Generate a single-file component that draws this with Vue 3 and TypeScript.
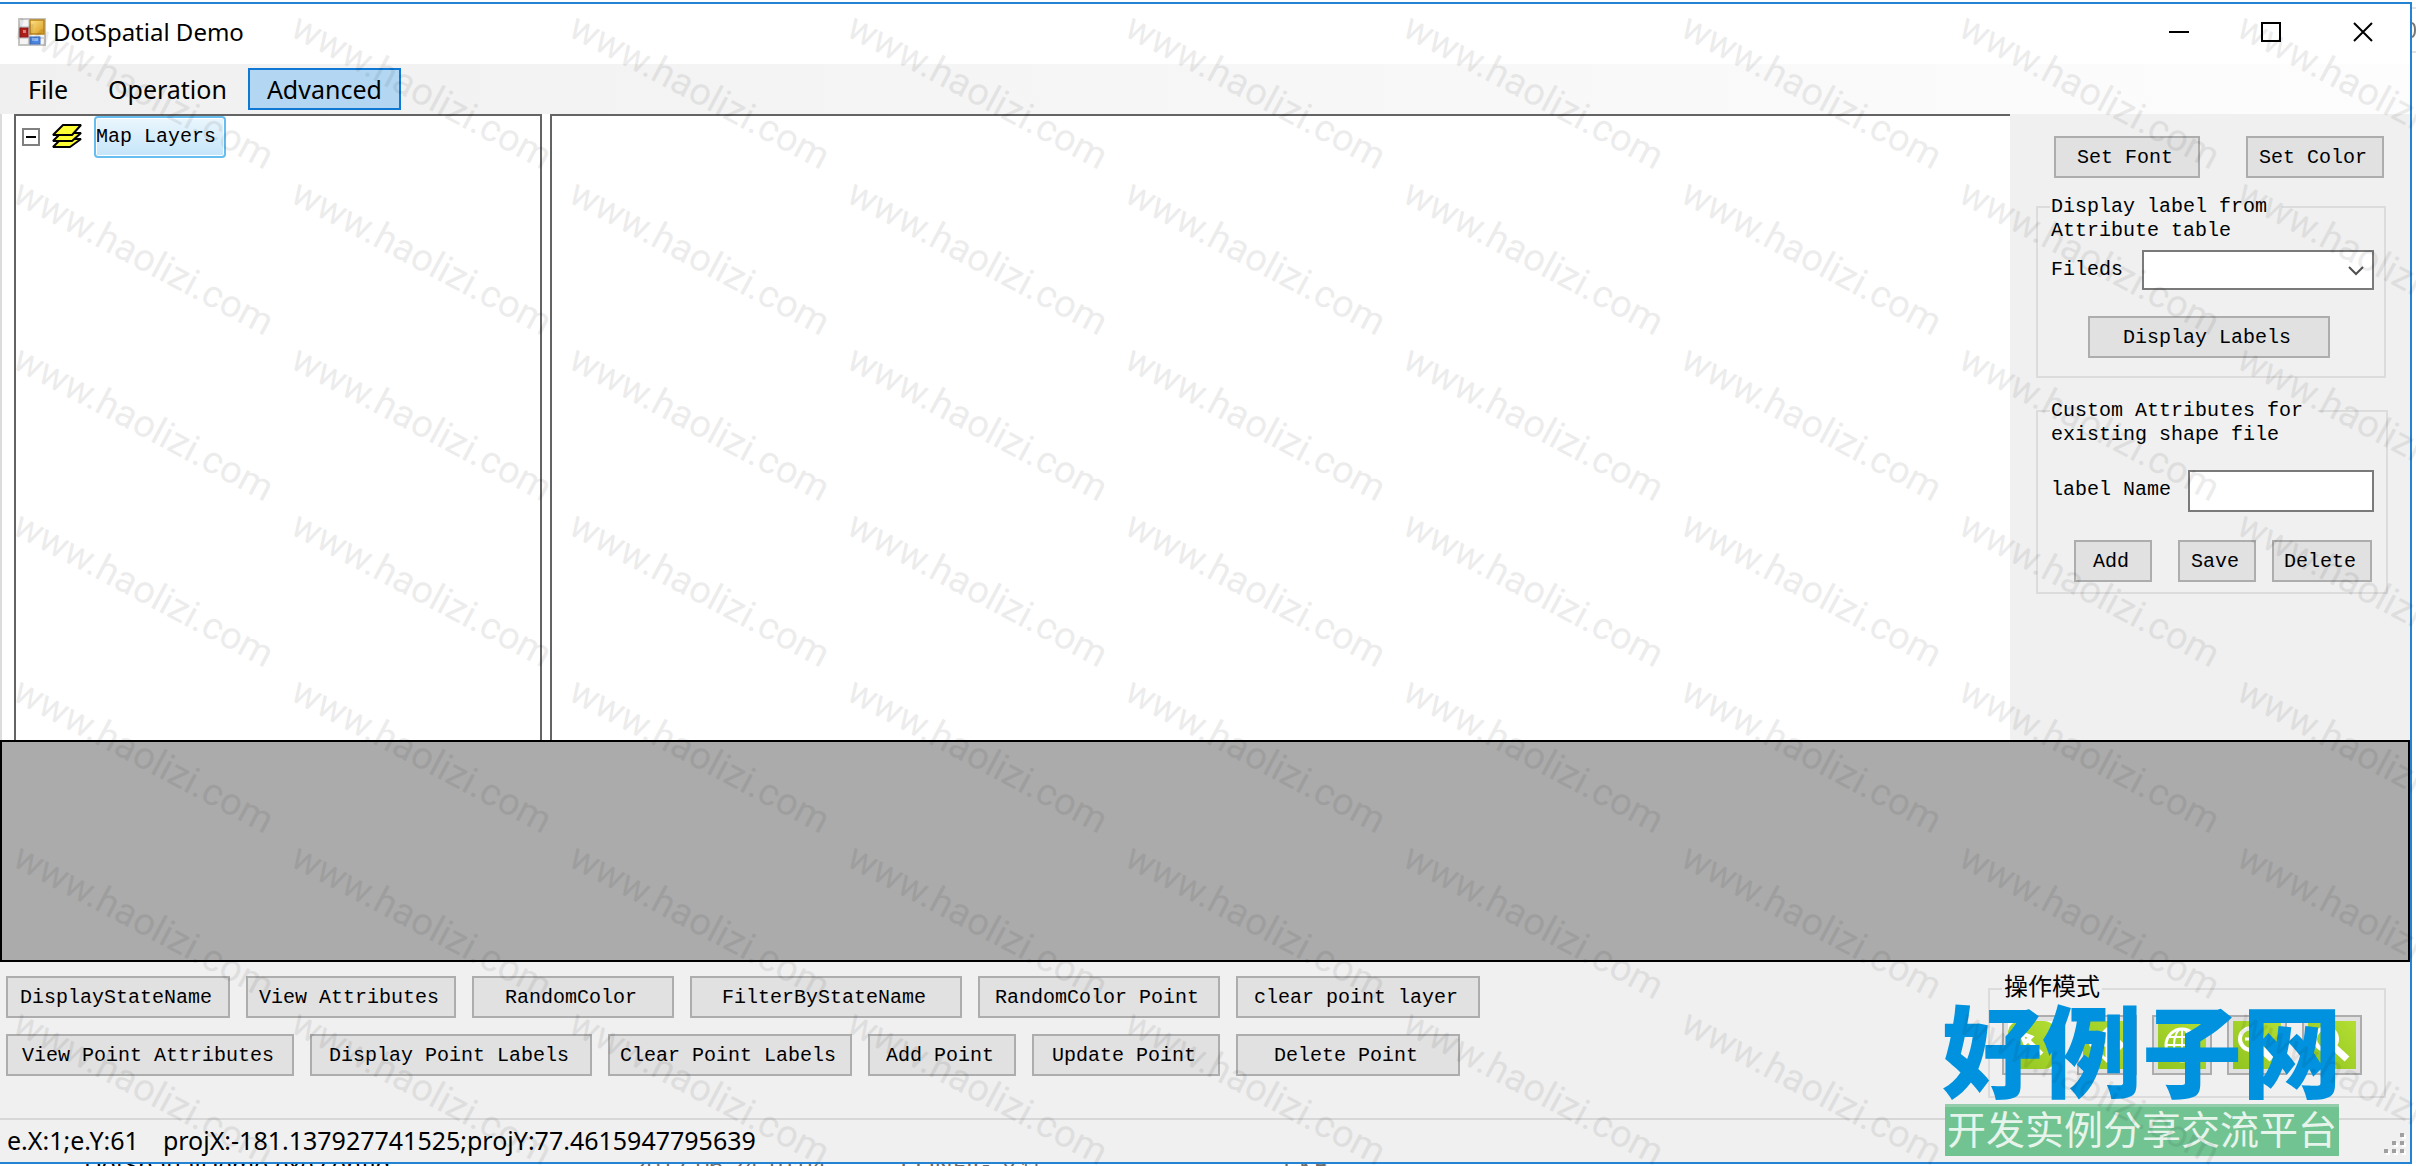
<script setup lang="ts">
import { ref } from 'vue'

interface Action {
  label: string
  width: number
}

const menus = ['File', 'Operation', 'Advanced']
const activeMenu = ref('Advanced')
const field = ref('')
const labelName = ref('')

const actionRows: Action[][] = [
  [
    { label: 'DisplayStateName', width: 224 },
    { label: 'View Attributes', width: 210 },
    { label: 'RandomColor', width: 202 },
    { label: 'FilterByStateName', width: 272 },
    { label: 'RandomColor Point', width: 242 },
    { label: 'clear point layer', width: 244 },
  ],
  [
    { label: 'View Point Attributes', width: 288 },
    { label: 'Display Point Labels', width: 282 },
    { label: 'Clear Point Labels', width: 244 },
    { label: 'Add Point', width: 148 },
    { label: 'Update Point', width: 188 },
    { label: 'Delete Point', width: 224 },
  ],
]

const modes = ['select', 'pan', 'globe', 'zoom-out', 'zoom']
const stamps = 63
</script>

<template>
  <div class="desktop">
    <div class="desk-row">
      <div class="window">
        <header class="titlebar">
          <svg class="app-icon" viewBox="0 0 28 28" aria-hidden="true">
            <defs>
              <linearGradient id="gold" x1="0" y1="0" x2="1" y2="1">
                <stop offset="0" stop-color="#ffe48a" />
                <stop offset="1" stop-color="#d99a1c" />
              </linearGradient>
            </defs>
            <rect x="1" y="1" width="26" height="26" fill="#f4f4f4" stroke="#c4c4c4" stroke-width="2" />
            <path d="M11 1v26M1 9h11M1 20h26M21 18v9" stroke="#c9c9c9" stroke-width="1.5" />
            <rect x="12" y="2" width="14" height="14" fill="url(#gold)" stroke="#b8841b" stroke-width="1.5" />
            <rect x="2" y="10" width="8" height="9" fill="#b3201c" stroke="#8e1714" />
            <rect x="5" y="12" width="3" height="3" fill="#e88a80" />
            <rect x="12" y="19" width="10" height="7" fill="#4c86e0" stroke="#3a6fc4" />
            <rect x="14" y="20" width="6" height="3" fill="#8db8f5" />
          </svg>
          <h1>DotSpatial Demo</h1>
          <div class="caption-buttons">
            <button type="button" aria-label="Minimize">
              <svg viewBox="0 0 20 20"><path d="M0 10h20" /></svg>
            </button>
            <button type="button" aria-label="Maximize">
              <svg viewBox="0 0 20 20"><path d="M1 1h18v18H1z" /></svg>
            </button>
            <button type="button" aria-label="Close">
              <svg viewBox="0 0 20 20"><path d="M1 1l18 18M19 1L1 19" /></svg>
            </button>
          </div>
        </header>

        <nav class="menubar">
          <button
            v-for="menu in menus"
            :key="menu"
            type="button"
            :class="{ active: menu === activeMenu }"
            @click="activeMenu = menu"
          >
            {{ menu }}
          </button>
        </nav>

        <main class="workspace">
          <section class="legend-tree">
            <button type="button" class="expander" aria-label="Collapse">
              <svg viewBox="0 0 18 18"><path d="M1 1h16v16H1z" fill="#fff" stroke="#808080" stroke-width="2" /><path d="M4 9h10" stroke="#000" stroke-width="2" /></svg>
            </button>
            <svg class="layers-icon" viewBox="0 0 30 24" aria-hidden="true">
              <g fill="#ffff33" stroke="#000" stroke-width="2" stroke-linejoin="bevel">
                <path d="M1 23l8-8h20l-11 8z" />
                <path d="M1 17l8-8h20l-9 8z" />
                <path d="M1 11l10-10h18l-9 10z" />
              </g>
            </svg>
            <span class="tree-label">Map Layers</span>
          </section>
          <section class="map" aria-label="Map"></section>

          <aside class="side">
            <div class="top-buttons">
              <button type="button" class="btn w146">Set Font</button>
              <button type="button" class="btn w138">Set Color</button>
            </div>

            <fieldset class="group attribute-group">
              <legend>Display label from<br />Attribute table</legend>
              <div class="field">
                <label for="field">Fileds</label>
                <div class="combo">
                  <select id="field" v-model="field">
                    <option value=""></option>
                  </select>
                  <svg viewBox="0 0 16 10" aria-hidden="true"><path d="M1 1l7 7 7-7" /></svg>
                </div>
              </div>
              <button type="button" class="btn display-labels">Display Labels</button>
            </fieldset>

            <fieldset class="group custom-group">
              <legend>Custom Attributes for<br />existing shape file</legend>
              <div class="field">
                <label for="label-name">label Name</label>
                <input id="label-name" v-model="labelName" type="text" />
              </div>
              <div class="edit-buttons">
                <button type="button" class="btn add">Add</button>
                <button type="button" class="btn save">Save</button>
                <button type="button" class="btn delete">Delete</button>
              </div>
            </fieldset>
          </aside>
        </main>

        <section class="data-grid" aria-label="Attribute data"></section>

        <section class="actions">
          <div class="action-rows">
            <div v-for="(row, i) in actionRows" :key="i" class="action-row">
              <button
                v-for="action in row"
                :key="action.label"
                type="button"
                class="btn"
                :style="{ width: action.width + 'px' }"
              >
                {{ action.label }}
              </button>
            </div>
          </div>
          <fieldset class="group mode-group">
            <legend>操作模式</legend>
            <div class="modes">
              <button v-for="mode in modes" :key="mode" type="button" class="mode" :aria-label="mode">
                <svg viewBox="0 0 48 48" aria-hidden="true">
                  <defs>
                    <linearGradient id="lime" x1="1" y1="0" x2="0" y2="1">
                      <stop offset="0" stop-color="#b4de33" />
                      <stop offset="1" stop-color="#90c41f" />
                    </linearGradient>
                  </defs>
                  <rect v-if="mode === 'select'" width="48" height="48" fill="#fff" />
                  <rect width="48" height="48" :rx="mode === 'select' ? 12 : 0" fill="url(#lime)" />
                  <g fill="none" stroke="#fff" stroke-width="3">
                    <path v-if="mode === 'select'" d="M13 12l10 4-3 3 14 14M13 12l4 10 3-3" stroke-width="4" />
                    <path v-else-if="mode === 'pan'" d="M24 8v32M8 24h32M18 14l6-6 6 6M18 34l6 6 6-6M14 18l-6 6 6 6M34 18l6 6-6 6" />
                    <g v-else-if="mode === 'globe'" stroke-width="2">
                      <circle cx="24" cy="24" r="16" stroke-width="3" />
                      <ellipse cx="24" cy="24" rx="8" ry="16" />
                      <path d="M24 8v32M8 24h32M11 16h26M11 32h26" />
                    </g>
                    <g v-else>
                      <circle cx="18" cy="18" r="11" stroke-width="4" />
                      <path d="M26 26l13 12" stroke-width="7" />
                      <path v-if="mode === 'zoom-out'" d="M12 18h12" />
                    </g>
                  </g>
                </svg>
              </button>
            </div>
          </fieldset>
        </section>

        <footer class="statusbar">
          <span>e.X:1;e.Y:61</span>
          <span>projX:-181.137927741525;projY:77.4615947795639</span>
          <svg class="grip" viewBox="0 0 24 24" aria-hidden="true">
            <path fill="#fff" d="M18 2h4v4h-4zM10 10h4v4h-4zM18 10h4v4h-4zM2 18h4v4H2zM10 18h4v4h-4zM18 18h4v4h-4z" />
            <path fill="#a0a0a0" d="M16 0h4v4h-4zM8 8h4v4H8zM16 8h4v4h-4zM0 16h4v4H0zM8 16h4v4H8zM16 16h4v4h-4z" />
          </svg>
        </footer>
      </div>
      <div class="behind-right" aria-hidden="true">
        <svg viewBox="0 0 4 16"><path d="M0 1q3 1 3 7t-3 7" fill="none" stroke="#777" stroke-width="2" /></svg>
      </div>
    </div>
    <div class="behind-bottom" aria-hidden="true">
      <span>DotSpatialDemo.exe.config</span>
      <span>2017-06-24 10:04</span>
      <span>CONFIG 文件</span>
      <span>1 KB</span>
    </div>

    <div class="brand">
      <strong>好例子网</strong>
      <span>开发实例分享交流平台</span>
    </div>
    <div class="watermark" aria-hidden="true">
      <div v-for="n in stamps" :key="n"><span>www.haolizi.com</span></div>
    </div>
  </div>
</template>

<style>
body {
  margin: 0;
  background: #fff;
}
</style>

<style scoped>
.desktop {
  position: relative;
  display: flex;
  flex-direction: column;
  min-height: 100vh;
  overflow: hidden;
  color: #000;
  font: 20px/24px "Liberation Mono", "Noto Sans CJK SC", monospace;
}
.desktop *,
.desktop {
  box-sizing: border-box;
}
button,
input,
select {
  margin: 0;
  padding: 0;
  border: 0;
  border-radius: 0;
  color: inherit;
  font: inherit;
}
.desk-row {
  display: flex;
  flex: 1;
  padding-top: 2px;
}
.window {
  display: flex;
  flex: 1;
  flex-direction: column;
  min-width: 0;
  border: 2px solid #2484d3;
  border-left: 0;
  background: #f0f0f0;
}
.behind-right {
  width: 4px;
  height: 46px;
  margin-top: 5px;
  padding-top: 13px;
  border: 2px solid #e2e2e2;
  border-width: 2px 0;
}
.behind-right svg {
  display: block;
  width: 4px;
  height: 16px;
}
.behind-bottom {
  display: grid;
  grid-template-columns: 549px 268px 378px 1fr;
  height: 2px;
  padding-left: 84px;
  overflow: hidden;
  background: #fff;
  color: #6d6d6d;
  font: 24px/2px "Noto Sans", "Noto Sans CJK SC", sans-serif;
}
.behind-bottom span:first-child {
  color: #000;
}

/* title bar */
.titlebar {
  display: flex;
  align-items: center;
  height: 60px;
  padding: 0 1px 4px 18px;
  background: #fff;
}
.app-icon {
  width: 28px;
  height: 28px;
  margin-right: 7px;
}
h1 {
  flex: 1;
  margin: 0;
  font: 400 24px/32px "Noto Sans", "Open Sans", sans-serif;
}
.caption-buttons {
  display: flex;
}
.caption-buttons button {
  width: 92px;
  height: 56px;
  background: none;
}
.caption-buttons svg {
  display: block;
  width: 20px;
  height: 20px;
  margin: 0 auto;
  fill: none;
  stroke: #000;
  stroke-width: 2;
}

/* menu */
.menubar {
  display: flex;
  gap: 2px;
  align-items: center;
  height: 50px;
  padding-left: 9px;
  background: linear-gradient(90deg, #f0f0f0, #fdfdfd);
}
.menubar button {
  height: 42px;
  padding: 0 17px;
  border: 2px solid transparent;
  background: none;
  font: 25px/32px "Noto Sans", "Open Sans", sans-serif;
}
.menubar button.active {
  border-color: #0f78d4;
  background: #b3d7f3;
}

/* workspace */
.workspace {
  display: flex;
  flex: 1;
  border-left: 2px solid #dcdcdc;
  background: #fff;
}
.legend-tree {
  display: flex;
  align-items: flex-start;
  width: 528px;
  margin: 0 8px 0 12px;
  padding-left: 6px;
  border: 2px solid #646464;
  border-bottom: 0;
}
.expander {
  width: 18px;
  height: 18px;
  margin-top: 12px;
  background: none;
}
.expander svg {
  display: block;
}
.layers-icon {
  width: 30px;
  height: 24px;
  margin: 8px 12px 0;
}
.tree-label {
  height: 42px;
  padding: 7px 8px 0 0;
  border: 2px solid #66bdf0;
  border-radius: 4px;
  background: linear-gradient(#ebf6fd, #c4e5f9);
  box-shadow: inset 0 0 0 1px #fff;
}
.map {
  flex: 1;
  border: solid #646464;
  border-width: 2px 0 0 2px;
}
.side {
  width: 400px;
  padding: 22px 22px 0 26px;
  background: #f0f0f0;
}
.btn {
  height: 42px;
  padding: 2px 4px 0 0;
  border: 2px solid #adadad;
  background: #e1e1e1;
  white-space: nowrap;
}
.w146 {
  width: 146px;
}
.w138 {
  width: 138px;
}
.top-buttons {
  display: flex;
  gap: 46px;
  padding-left: 18px;
}
.group {
  min-width: 0;
  margin: 0;
  border: 2px solid #dcdcdc;
}
.group legend {
  height: 24px;
  padding: 0 1px;
  white-space: nowrap;
}
.attribute-group {
  width: 350px;
  margin-top: 17px;
  padding: 0 10px 18px 12px;
}
.attribute-group legend {
  width: 232px;
}
.field {
  display: flex;
  justify-content: space-between;
}
.field label {
  margin-top: 8px;
  padding-left: 1px;
}
.attribute-group .field {
  padding-top: 31px;
}
.combo {
  position: relative;
  width: 232px;
}
.combo select {
  display: block;
  width: 100%;
  height: 40px;
  border: 2px solid #7a7a7a;
  background: #fff;
  appearance: none;
}
.combo svg {
  position: absolute;
  top: 16px;
  right: 10px;
  width: 16px;
  height: 10px;
  fill: none;
  stroke: #505050;
  stroke-width: 2;
  pointer-events: none;
}
.display-labels {
  display: block;
  width: 242px;
  margin: 26px 0 0 38px;
}
.custom-group {
  width: 352px;
  margin-top: 21px;
  padding: 0 12px 10px;
}
.custom-group legend {
  width: 268px;
}
.custom-group .field {
  padding-top: 47px;
}
.custom-group input {
  width: 186px;
  height: 42px;
  padding: 0 6px;
  border: 2px solid #7a7a7a;
  background: #fff;
}
.edit-buttons {
  display: flex;
  gap: 16px;
  padding: 28px 2px 0 24px;
}
.add,
.save {
  width: 78px;
}
.add {
  margin-right: auto;
}
.delete {
  width: 100px;
}

/* lower area */
.data-grid {
  height: 222px;
  border: 2px solid #000;
  background: #ababab;
}
.actions {
  display: flex;
  justify-content: space-between;
  height: 156px;
  padding: 12px 24px 0 6px;
}
.action-rows {
  display: flex;
  flex-direction: column;
  gap: 16px;
  padding-top: 2px;
}
.action-row {
  display: flex;
  gap: 16px;
}
.mode-group {
  width: 398px;
  height: 124px;
  padding: 0 12px;
}
.mode-group legend {
  height: 30px;
  padding: 0 2px;
  font-size: 24px;
  line-height: 30px;
}
.modes {
  display: flex;
  gap: 15px;
  padding-top: 11px;
}
.mode {
  width: 60px;
  height: 60px;
  padding: 4px;
  border: 2px solid #adadad;
  background: #e1e1e1;
}
.mode svg {
  display: block;
  width: 48px;
  height: 48px;
}
.statusbar {
  display: flex;
  gap: 24px;
  align-items: center;
  height: 44px;
  padding: 0 2px 2px 7px;
  border-top: 2px solid #d7d7d7;
  font: 25px/32px "Noto Sans", "Open Sans", sans-serif;
}
.grip {
  width: 24px;
  height: 24px;
  margin: 10px 0 0 auto;
}

/* overlays */
.brand {
  position: absolute;
  right: 77px;
  bottom: 10px;
  width: 394px;
  text-align: center;
  font-family: "Noto Sans CJK SC", sans-serif;
}
.brand strong {
  display: block;
  height: 107px;
  margin: 0 -4px;
  color: #0092df;
  font-size: 100px;
  font-weight: 900;
  line-height: 100px;
  white-space: nowrap;
}
.brand span {
  display: block;
  height: 52px;
  border-top: 3px solid #93cdac;
  background: #71c392;
  color: #e6f4eb;
  font-size: 39px;
  line-height: 40px;
  white-space: nowrap;
}
.watermark {
  position: absolute;
  inset: 0;
  display: grid;
  grid-template-columns: repeat(9, 278px);
  grid-auto-rows: 166px;
  overflow: hidden;
  color: #000;
  font: 38px/36px Roboto, sans-serif;
  opacity: 0.07;
  pointer-events: none;
}
.watermark div {
  padding: 4px 0 0 11px;
}
.watermark span {
  display: block;
  white-space: nowrap;
  transform: rotate(28deg);
  transform-origin: 0 30px;
}
</style>
